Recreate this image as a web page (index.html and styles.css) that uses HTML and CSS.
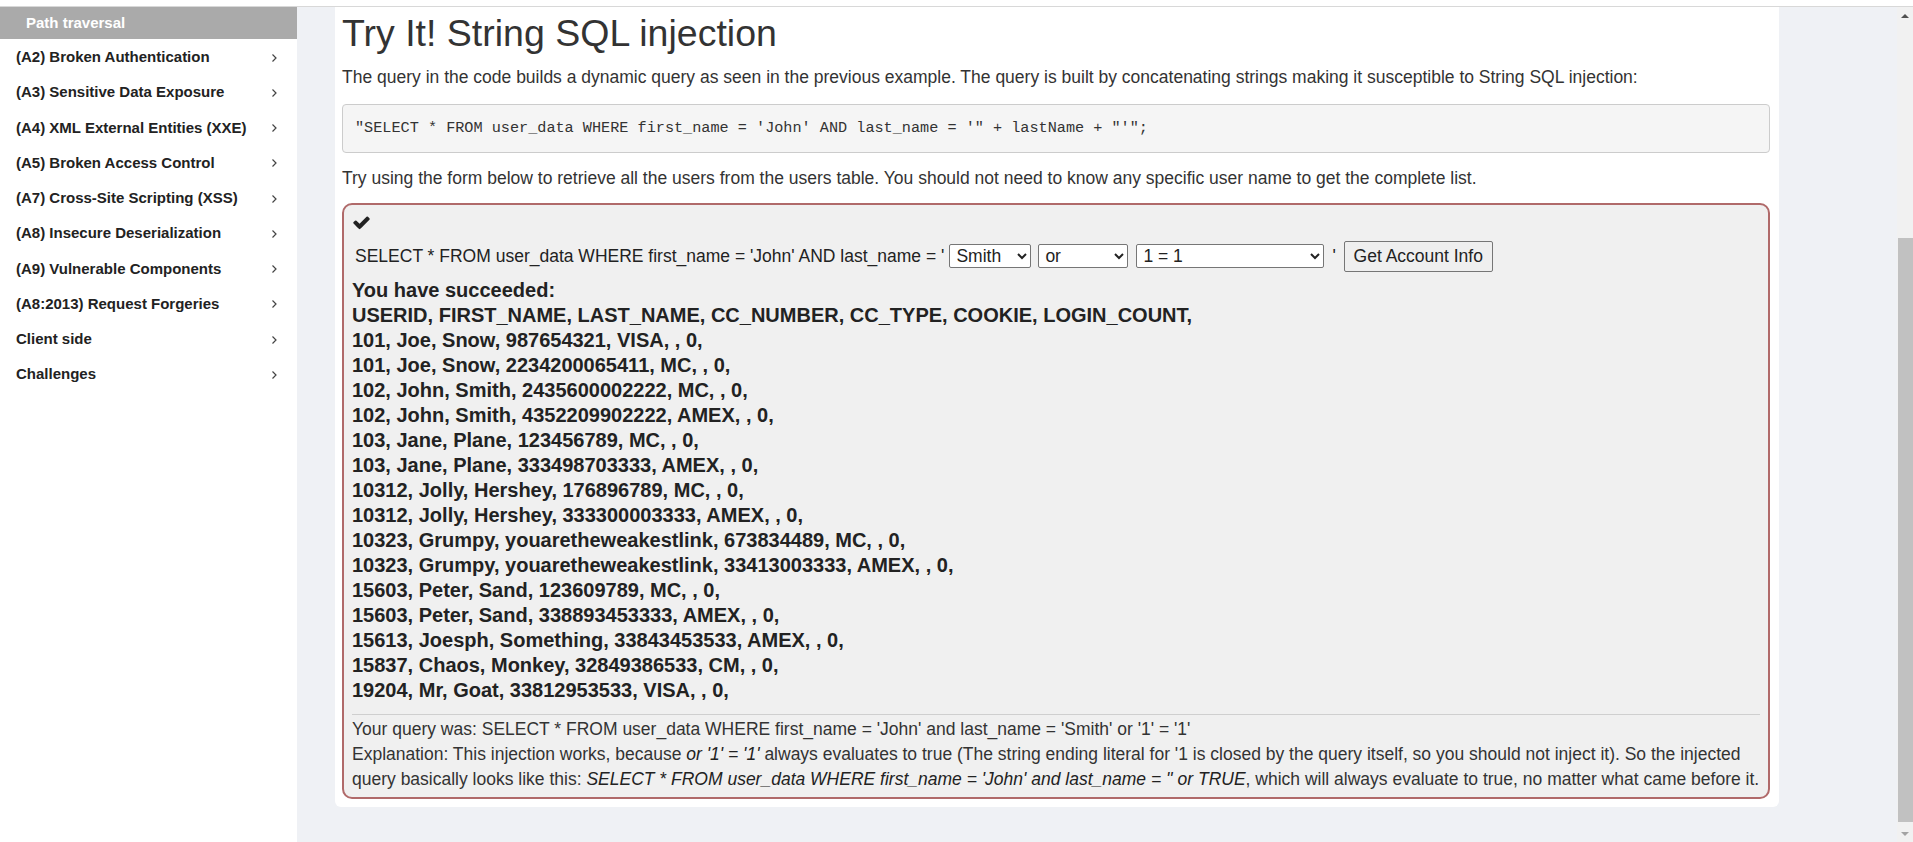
FILE: index.html
```html
<!DOCTYPE html>
<html lang="en">
<head>
<meta charset="utf-8">
<title>WebGoat - SQL Injection</title>
<link rel="stylesheet" href="styles.css">
</head>
<body>
<div class="topbar"></div>
<div class="layout">
  <nav class="sidebar">
    <div class="nav-active">Path traversal</div>
    <ul class="nav-list">
      <li class="nav-item"><span>(A2) Broken Authentication</span><svg class="chev" width="7" height="10" viewBox="0 0 7 10"><polyline points="1.5,1.5 5,5 1.5,8.5" fill="none" stroke="#444" stroke-width="1.2"/></svg></li>
      <li class="nav-item"><span>(A3) Sensitive Data Exposure</span><svg class="chev" width="7" height="10" viewBox="0 0 7 10"><polyline points="1.5,1.5 5,5 1.5,8.5" fill="none" stroke="#444" stroke-width="1.2"/></svg></li>
      <li class="nav-item"><span>(A4) XML External Entities (XXE)</span><svg class="chev" width="7" height="10" viewBox="0 0 7 10"><polyline points="1.5,1.5 5,5 1.5,8.5" fill="none" stroke="#444" stroke-width="1.2"/></svg></li>
      <li class="nav-item"><span>(A5) Broken Access Control</span><svg class="chev" width="7" height="10" viewBox="0 0 7 10"><polyline points="1.5,1.5 5,5 1.5,8.5" fill="none" stroke="#444" stroke-width="1.2"/></svg></li>
      <li class="nav-item"><span>(A7) Cross-Site Scripting (XSS)</span><svg class="chev" width="7" height="10" viewBox="0 0 7 10"><polyline points="1.5,1.5 5,5 1.5,8.5" fill="none" stroke="#444" stroke-width="1.2"/></svg></li>
      <li class="nav-item"><span>(A8) Insecure Deserialization</span><svg class="chev" width="7" height="10" viewBox="0 0 7 10"><polyline points="1.5,1.5 5,5 1.5,8.5" fill="none" stroke="#444" stroke-width="1.2"/></svg></li>
      <li class="nav-item"><span>(A9) Vulnerable Components</span><svg class="chev" width="7" height="10" viewBox="0 0 7 10"><polyline points="1.5,1.5 5,5 1.5,8.5" fill="none" stroke="#444" stroke-width="1.2"/></svg></li>
      <li class="nav-item"><span>(A8:2013) Request Forgeries</span><svg class="chev" width="7" height="10" viewBox="0 0 7 10"><polyline points="1.5,1.5 5,5 1.5,8.5" fill="none" stroke="#444" stroke-width="1.2"/></svg></li>
      <li class="nav-item"><span>Client side</span><svg class="chev" width="7" height="10" viewBox="0 0 7 10"><polyline points="1.5,1.5 5,5 1.5,8.5" fill="none" stroke="#444" stroke-width="1.2"/></svg></li>
      <li class="nav-item"><span>Challenges</span><svg class="chev" width="7" height="10" viewBox="0 0 7 10"><polyline points="1.5,1.5 5,5 1.5,8.5" fill="none" stroke="#444" stroke-width="1.2"/></svg></li>
    </ul>
  </nav>
  <main class="main">
    <div class="card">
      <h2 class="title">Try It! String SQL injection</h2>
      <p class="para para-first">The query in the code builds a dynamic query as seen in the previous example. The query is built by concatenating strings making it susceptible to String SQL injection:</p>
      <pre class="code">"SELECT * FROM user_data WHERE first_name = 'John' AND last_name = '" + lastName + "'";</pre>
      <p class="para para-second">Try using the form below to retrieve all the users from the users table. You should not need to know any specific user name to get the complete list.</p>
      <div class="attack">
        <div class="check-row">
          <svg class="check" width="19" height="19" viewBox="0 0 1792 1792"><path fill="#222" d="M1671 566q0 40-28 68l-724 724-136 136q-28 28-68 28t-68-28l-136-136-362-362q-28-28-28-68t28-68l136-136q28-28 68-28t68 28l294 295 656-657q28-28 68-28t68 28l136 136q28 28 28 68z"/></svg>
        </div>
        <form class="query-row">
          <span class="q-text">SELECT * FROM user_data WHERE first_name = 'John' AND last_name = '</span>
          <select class="sel sel-name"><option>Smith</option><option>Smith'</option></select>
          <select class="sel sel-op"><option>or</option><option>and</option></select>
          <select class="sel sel-cond"><option>1 = 1</option><option>1 = 2</option><option>'1' = '1</option></select>
          <span class="q-quote">'</span>
          <button type="button" class="btn">Get Account Info</button>
        </form>
        <p class="output">You have succeeded:<br>USERID, FIRST_NAME, LAST_NAME, CC_NUMBER, CC_TYPE, COOKIE, LOGIN_COUNT, <br>101, Joe, Snow, 987654321, VISA, , 0, <br>101, Joe, Snow, 2234200065411, MC, , 0, <br>102, John, Smith, 2435600002222, MC, , 0, <br>102, John, Smith, 4352209902222, AMEX, , 0, <br>103, Jane, Plane, 123456789, MC, , 0, <br>103, Jane, Plane, 333498703333, AMEX, , 0, <br>10312, Jolly, Hershey, 176896789, MC, , 0, <br>10312, Jolly, Hershey, 333300003333, AMEX, , 0, <br>10323, Grumpy, youaretheweakestlink, 673834489, MC, , 0, <br>10323, Grumpy, youaretheweakestlink, 33413003333, AMEX, , 0, <br>15603, Peter, Sand, 123609789, MC, , 0, <br>15603, Peter, Sand, 338893453333, AMEX, , 0, <br>15613, Joesph, Something, 33843453533, AMEX, , 0, <br>15837, Chaos, Monkey, 32849386533, CM, , 0, <br>19204, Mr, Goat, 33812953533, VISA, , 0, </p>
        <hr class="sep">
        <p class="feedback">Your query was: SELECT * FROM user_data WHERE first_name = 'John' and last_name = 'Smith' or '1' = '1'<br>Explanation: This injection works, because <i>or '1' = '1'</i> always evaluates to true (The string ending literal for '1 is closed by the query itself, so you should not inject it). So the injected query basically looks like this: <i>SELECT * FROM user_data WHERE first_name = 'John' and last_name = '' or TRUE</i>, which will always evaluate to true, no matter what came before it.</p>
      </div>
    </div>
  </main>
  <div class="scrollbar">
    <div class="sb-btn"><span class="arrow-up"></span></div>
    <div class="sb-track">
      <div class="sb-thumb"></div>
    </div>
    <div class="sb-btn"><span class="arrow-down"></span></div>
  </div>
</div>
</body>
</html>
```

FILE: styles.css
```css
* {
  box-sizing: border-box;
}

html, body {
  margin: 0;
  padding: 0;
}

body {
  width: 1913px;
  height: 842px;
  overflow: hidden;
  font-family: "Liberation Sans", Arial, sans-serif;
  color: #333;
  background: #eff1f5;
}

.topbar {
  height: 7px;
  background: #fff;
  border-bottom: 1px solid #d8d8d8;
}

.layout {
  display: flex;
  height: 835px;
}

/* Sidebar */
.sidebar {
  width: 297px;
  flex: none;
  background: #fff;
}

.nav-active {
  height: 32px;
  line-height: 32px;
  padding-left: 26px;
  background: #aaaaaa;
  color: #fff;
  font-weight: bold;
  font-size: 15px;
}

.nav-list {
  list-style: none;
  margin: 0;
  padding: 0;
}

.nav-item {
  height: 35.25px;
  display: flex;
  align-items: center;
  justify-content: space-between;
  padding: 0 19px 0 16px;
  font-size: 15px;
  font-weight: bold;
  color: #222;
}

.chev {
  display: block;
  margin-top: 2px;
}

/* Main content */
.main {
  flex: 1;
  padding: 0 118px 0 38px;
  background: #eff1f5;
}

.card {
  background: #fff;
  border-radius: 0 0 6px 6px;
  padding: 6px 9px 8px 7px;
}

.title {
  margin: 0;
  font-size: 37.5px;
  line-height: 41.25px;
  font-weight: normal;
  color: #333;
}

.para {
  margin: 0;
  font-size: 17.5px;
  line-height: 25px;
  color: #333;
}

.para-first {
  margin-top: 11px;
}

.code {
  margin: 14px 0 0 0;
  height: 49px;
  padding: 12px 12px;
  background: #f5f5f5;
  border: 1px solid #cccccc;
  border-radius: 4px;
  font-family: "Liberation Mono", "DejaVu Sans Mono", monospace;
  font-size: 15.2px;
  line-height: 23px;
  color: #333;
  white-space: pre;
}

.para-second {
  margin-top: 12.5px;
}

/* Attack box */
.attack {
  margin-top: 12.5px;
  border: 2px solid #b06a6a;
  border-radius: 10px;
  background: #f0f0f0;
  padding: 5px 8px 5.5px 8px;
}

.check-row {
  height: 25px;
  display: flex;
  align-items: center;
}

.check {
  display: block;
  margin-left: 0;
}

.query-row {
  margin: 5px 0 0 0;
  height: 32px;
  display: flex;
  align-items: center;
  font-size: 17.5px;
  color: #222;
}

.q-text {
  padding-left: 3px;
  white-space: pre;
}

.sel {
  height: 24px;
  font-family: "Liberation Sans", Arial, sans-serif;
  font-size: 17.5px;
  color: #222;
  background: #fff;
  border: 1px solid #767676;
  border-radius: 2px;
  padding: 0 2px;
}

.sel-name {
  width: 82px;
  margin-left: 5px;
}

.sel-op {
  width: 90px;
  margin-left: 7px;
}

.sel-cond {
  width: 188px;
  margin-left: 8px;
}

.q-quote {
  margin-left: 8px;
}

.btn {
  margin-left: 8px;
  width: 149px;
  height: 31px;
  padding: 0;
  font-family: "Liberation Sans", Arial, sans-serif;
  font-size: 17.5px;
  color: #222;
  background: #efefef;
  border: 1px solid #767676;
  border-radius: 2px;
}

.output {
  margin: 5.5px 0 0 0;
  font-size: 20px;
  line-height: 25px;
  font-weight: bold;
  color: #222;
}

.sep {
  margin: 11px 0 2px 0;
  border: 0;
  border-top: 1px solid #cfcfcf;
  height: 0;
}

.feedback {
  margin: 0 -6px 0 0;
  font-size: 17.5px;
  line-height: 25px;
  color: #333;
}

.feedback i {
  color: #222;
}

/* Scrollbar */
.scrollbar {
  width: 16px;
  flex: none;
  display: flex;
  flex-direction: column;
  background: #f1f1f1;
}

.sb-btn {
  height: 17px;
  display: flex;
  align-items: center;
  justify-content: center;
}

.arrow-up {
  width: 0;
  height: 0;
  border-left: 4px solid transparent;
  border-right: 4px solid transparent;
  border-bottom: 4px solid #505050;
}

.arrow-down {
  width: 0;
  height: 0;
  border-left: 4px solid transparent;
  border-right: 4px solid transparent;
  border-top: 4px solid #a3a3a3;
}

.sb-track {
  flex: 1;
  padding: 214px 0 3px 1px;
  display: flex;
  flex-direction: column;
}

.sb-thumb {
  flex: 1;
  background: #c1c1c1;
}
```
